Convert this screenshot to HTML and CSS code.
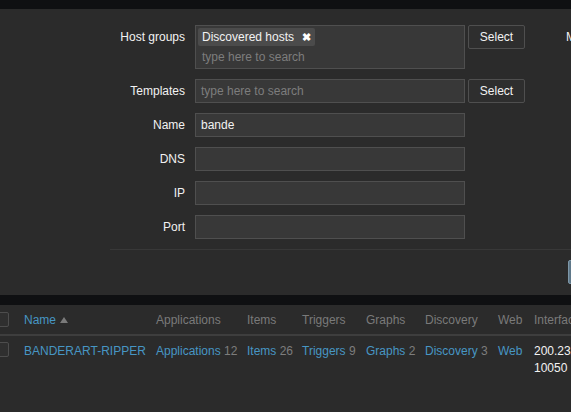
FILE: index.html
```html
<!DOCTYPE html>
<html>
<head>
<meta charset="utf-8">
<link rel="stylesheet" href="styles.css">
</head>
<body>
<div class="page">
  <div class="topbar"></div>
  <div class="filter">
    <div class="cols">
      <div class="form">
        <div class="row">
          <div class="label lbl-multi">Host groups</div>
          <div class="multi">
            <div class="chips"><span class="chip">Discovered hosts <span class="x">✖</span></span></div>
            <div class="ph">type here to search</div>
          </div>
          <button class="btn">Select</button>
        </div>
        <div class="row">
          <div class="label">Templates</div>
          <div class="input ph-in">type here to search</div>
          <button class="btn">Select</button>
        </div>
        <div class="row">
          <div class="label">Name</div>
          <div class="input">bande</div>
        </div>
        <div class="row">
          <div class="label">DNS</div>
          <div class="input"></div>
        </div>
        <div class="row">
          <div class="label">IP</div>
          <div class="input"></div>
        </div>
        <div class="row">
          <div class="label">Port</div>
          <div class="input"></div>
        </div>
      </div>
      <div class="form2">
        <div class="label2">Monitored by</div>
      </div>
    </div>
    <div class="sep"></div>
    <div class="actions"><button class="apply">Apply</button></div>
  </div>
  <div class="gap"></div>
  <div class="table">
    <div class="tr thead">
      <div class="cell"><span class="cb"></span></div>
      <div class="cell"><a class="link">Name</a><span class="arrow"></span></div>
      <div class="cell">Applications</div>
      <div class="cell">Items</div>
      <div class="cell">Triggers</div>
      <div class="cell">Graphs</div>
      <div class="cell">Discovery</div>
      <div class="cell">Web</div>
      <div class="cell">Interface</div>
    </div>
    <div class="tr tbody">
      <div class="cell"><span class="cb"></span></div>
      <div class="cell"><a class="link">BANDERART-RIPPER</a></div>
      <div class="cell"><a class="link">Applications</a> <span class="cnt">12</span></div>
      <div class="cell"><a class="link">Items</a> <span class="cnt">26</span></div>
      <div class="cell"><a class="link">Triggers</a> <span class="cnt">9</span></div>
      <div class="cell"><a class="link">Graphs</a> <span class="cnt">2</span></div>
      <div class="cell"><a class="link">Discovery</a> <span class="cnt">3</span></div>
      <div class="cell"><a class="link">Web</a></div>
      <div class="cell iface">200.232.18.104:<br>10050</div>
    </div>
  </div>
</div>
</body>
</html>
```
FILE: styles.css
```css
html, body {
  margin: 0;
  padding: 0;
  background: #2b2b2b;
  overflow: hidden;
}
body {
  font-family: "Liberation Sans", Arial, sans-serif;
  font-size: 12px;
  color: #f2f2f2;
}
.page {
  width: 900px;
}
.topbar {
  height: 9px;
  background: #0f1012;
}
.filter {
  padding: 16px 0 11px 110px;
}
.cols {
  display: flex;
  gap: 41px;
}
.form {
  display: flex;
  flex-direction: column;
  gap: 10px;
}
.row {
  display: flex;
  align-items: flex-start;
}
.label {
  width: 75px;
  padding-right: 10px;
  text-align: right;
  line-height: 24px;
  height: 24px;
}
.input {
  box-sizing: border-box;
  width: 270px;
  height: 24px;
  border: 1px solid #4f4f4f;
  background: #383838;
  padding: 0 5px;
  line-height: 22px;
  color: #f2f2f2;
}
.ph-in, .ph {
  color: #7d7d7d;
}
.multi {
  box-sizing: border-box;
  width: 270px;
  height: 44px;
  border: 1px solid #4f4f4f;
  background: #383838;
  padding: 2px 0 0 2px;
}
.chips {
  display: flex;
  height: 18px;
}
.chip {
  display: inline-flex;
  align-items: center;
  height: 18px;
  box-sizing: border-box;
  width: 117px;
  padding: 0 4px;
  background: #4b4b4b;
  border-radius: 2px;
  line-height: 18px;
  white-space: nowrap;
}
.chip .x {
  margin-left: auto;
  font-size: 11px;
  font-weight: bold;
  color: #ffffff;
}
.ph {
  padding-left: 4px;
  line-height: 22px;
}
.btn {
  box-sizing: border-box;
  margin-left: 3px;
  width: 57px;
  height: 24px;
  border: 1px solid #4f4f4f;
  background: #2e2e2e;
  color: #f2f2f2;
  font-family: "Liberation Sans", Arial, sans-serif;
  font-size: 12px;
  border-radius: 2px;
  padding: 0;
}
.form2 {
  display: flex;
  flex-direction: column;
}
.label2 {
  line-height: 24px;
  white-space: nowrap;
}
.sep {
  margin-top: 10px;
  height: 1px;
  background: #383838;
}
.actions {
  display: flex;
  padding: 10px 0 0 458px;
}
.apply {
  box-sizing: border-box;
  height: 24px;
  width: 60px;
  border: 1px solid #7d97a8;
  background: #5f7889;
  color: #fff;
  border-radius: 2px;
  font-family: "Liberation Sans", Arial, sans-serif;
  font-size: 12px;
}
.gap {
  height: 10px;
  background: #0f1012;
}
.tr {
  display: grid;
  grid-template-columns: 24px 132px 91px 55px 64px 59px 73px 36px 1fr;
}
.thead {
  box-sizing: border-box;
  height: 31px;
  padding-top: 8px;
  line-height: 14px;
  color: #7a7a7a;
  border-bottom: 2px solid #3e3e3e;
}
.thead .cb {
  margin-top: -1px;
}
.tbody {
  padding-top: 7px;
  line-height: 17px;
}
.tbody .cb {
  margin-top: -1px;
}
.cell {
  white-space: nowrap;
}
.cb {
  display: block;
  box-sizing: border-box;
  width: 14px;
  height: 15px;
  margin-left: -5px;
  border: 1px solid #4d4d4d;
  background: #2f2f2f;
  border-radius: 2px;
}
.link {
  color: #4796c4;
}
.arrow {
  display: inline-block;
  width: 0;
  height: 0;
  margin-left: 4px;
  border-left: 4px solid transparent;
  border-right: 4px solid transparent;
  border-bottom: 6px solid #7a7a7a;
  vertical-align: 1px;
}
.cnt {
  color: #7d7d7d;
}
.iface {
  color: #f2f2f2;
}
```
